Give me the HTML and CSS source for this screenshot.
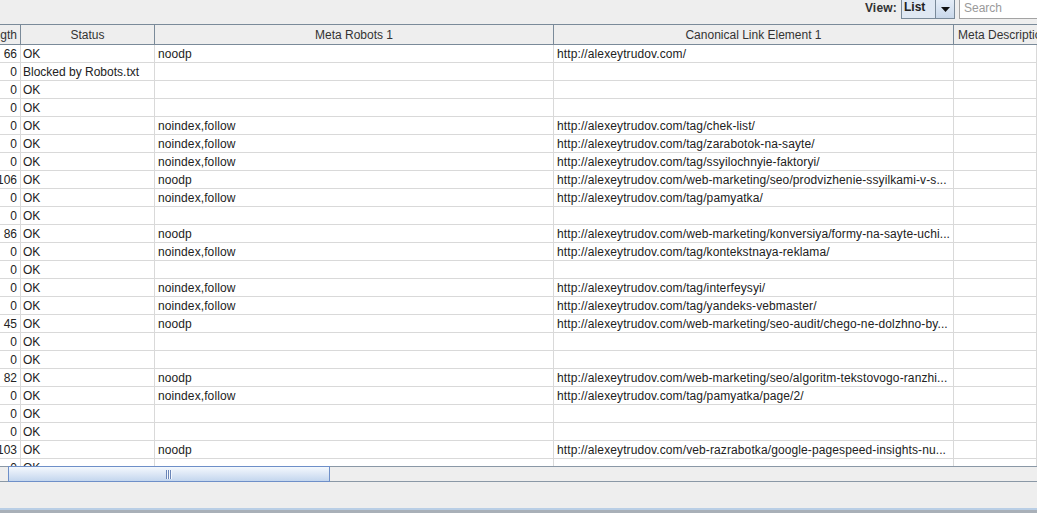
FILE: index.html
```html
<!DOCTYPE html>
<html>
<head>
<meta charset="utf-8">
<link rel="stylesheet" href="styles.css">
</head>
<body>
<div class="app">
  <div class="toolbar">
    <span class="view-label">View:</span>
    <div class="combo">
      <span class="combo-value">List</span>
      <span class="combo-btn"><svg width="9" height="5" viewBox="0 0 9 5"><path d="M0 0H9L4.5 5Z" fill="#111"/></svg></span>
    </div>
    <div class="search">Search</div>
  </div>

  <div class="table">
    <div class="row head">
      <div class="c num"><span>Length</span></div>
      <div class="c">Status</div>
      <div class="c">Meta Robots 1</div>
      <div class="c">Canonical Link Element 1</div>
      <div class="c last">Meta Description 1</div>
    </div>
    <div class="body">
      <div class="row"><div class="c num">66</div><div class="c st">OK</div><div class="c mr">noodp</div><div class="c url">http://alexeytrudov.com/</div><div class="c"></div></div>
      <div class="row"><div class="c num">0</div><div class="c st">Blocked by Robots.txt</div><div class="c mr"></div><div class="c url"></div><div class="c"></div></div>
      <div class="row"><div class="c num">0</div><div class="c st">OK</div><div class="c mr"></div><div class="c url"></div><div class="c"></div></div>
      <div class="row"><div class="c num">0</div><div class="c st">OK</div><div class="c mr"></div><div class="c url"></div><div class="c"></div></div>
      <div class="row"><div class="c num">0</div><div class="c st">OK</div><div class="c mr">noindex,follow</div><div class="c url">http://alexeytrudov.com/tag/chek-list/</div><div class="c"></div></div>
      <div class="row"><div class="c num">0</div><div class="c st">OK</div><div class="c mr">noindex,follow</div><div class="c url">http://alexeytrudov.com/tag/zarabotok-na-sayte/</div><div class="c"></div></div>
      <div class="row"><div class="c num">0</div><div class="c st">OK</div><div class="c mr">noindex,follow</div><div class="c url">http://alexeytrudov.com/tag/ssyilochnyie-faktoryi/</div><div class="c"></div></div>
      <div class="row"><div class="c num">106</div><div class="c st">OK</div><div class="c mr">noodp</div><div class="c url">http://alexeytrudov.com/web-marketing/seo/prodvizhenie-ssyilkami-v-s...</div><div class="c"></div></div>
      <div class="row"><div class="c num">0</div><div class="c st">OK</div><div class="c mr">noindex,follow</div><div class="c url">http://alexeytrudov.com/tag/pamyatka/</div><div class="c"></div></div>
      <div class="row"><div class="c num">0</div><div class="c st">OK</div><div class="c mr"></div><div class="c url"></div><div class="c"></div></div>
      <div class="row"><div class="c num">86</div><div class="c st">OK</div><div class="c mr">noodp</div><div class="c url">http://alexeytrudov.com/web-marketing/konversiya/formy-na-sayte-uchi...</div><div class="c"></div></div>
      <div class="row"><div class="c num">0</div><div class="c st">OK</div><div class="c mr">noindex,follow</div><div class="c url">http://alexeytrudov.com/tag/kontekstnaya-reklama/</div><div class="c"></div></div>
      <div class="row"><div class="c num">0</div><div class="c st">OK</div><div class="c mr"></div><div class="c url"></div><div class="c"></div></div>
      <div class="row"><div class="c num">0</div><div class="c st">OK</div><div class="c mr">noindex,follow</div><div class="c url">http://alexeytrudov.com/tag/interfeysyi/</div><div class="c"></div></div>
      <div class="row"><div class="c num">0</div><div class="c st">OK</div><div class="c mr">noindex,follow</div><div class="c url">http://alexeytrudov.com/tag/yandeks-vebmaster/</div><div class="c"></div></div>
      <div class="row"><div class="c num">45</div><div class="c st">OK</div><div class="c mr">noodp</div><div class="c url">http://alexeytrudov.com/web-marketing/seo-audit/chego-ne-dolzhno-by...</div><div class="c"></div></div>
      <div class="row"><div class="c num">0</div><div class="c st">OK</div><div class="c mr"></div><div class="c url"></div><div class="c"></div></div>
      <div class="row"><div class="c num">0</div><div class="c st">OK</div><div class="c mr"></div><div class="c url"></div><div class="c"></div></div>
      <div class="row"><div class="c num">82</div><div class="c st">OK</div><div class="c mr">noodp</div><div class="c url">http://alexeytrudov.com/web-marketing/seo/algoritm-tekstovogo-ranzhi...</div><div class="c"></div></div>
      <div class="row"><div class="c num">0</div><div class="c st">OK</div><div class="c mr">noindex,follow</div><div class="c url">http://alexeytrudov.com/tag/pamyatka/page/2/</div><div class="c"></div></div>
      <div class="row"><div class="c num">0</div><div class="c st">OK</div><div class="c mr"></div><div class="c url"></div><div class="c"></div></div>
      <div class="row"><div class="c num">0</div><div class="c st">OK</div><div class="c mr"></div><div class="c url"></div><div class="c"></div></div>
      <div class="row"><div class="c num">103</div><div class="c st">OK</div><div class="c mr">noodp</div><div class="c url">http://alexeytrudov.com/veb-razrabotka/google-pagespeed-insights-nu...</div><div class="c"></div></div>
      <div class="row"><div class="c num">0</div><div class="c st">OK</div><div class="c mr"></div><div class="c url"></div><div class="c"></div></div>
    </div>
  </div>

  <div class="hscroll">
    <div class="thumb"><span class="grip"></span></div>
  </div>
  <div class="statusbar"></div>
</div>
</body>
</html>
```

FILE: styles.css
```css
html, body {
  margin: 0;
  padding: 0;
}
body {
  width: 1037px;
  height: 513px;
  overflow: hidden;
  background: #eeeeee;
  font-family: "Liberation Sans", Arial, sans-serif;
  font-size: 12px;
  color: #222;
}
.app {
  display: flex;
  flex-direction: column;
  width: 1037px;
  height: 513px;
}
.toolbar {
  height: 24px;
  display: flex;
  justify-content: flex-end;
  align-items: flex-start;
  background: #eeeeee;
}
.view-label {
  font-weight: bold;
  color: #333;
  line-height: 16px;
  letter-spacing: 0.2px;
  margin-right: 4px;
}
.combo {
  display: flex;
  height: 21px;
  margin-top: -2px;
  box-sizing: border-box;
  border: 1px solid #7a8a99;
  background: #dfe8f3;
}
.combo-value {
  width: 31px;
  padding-left: 2px;
  font-weight: bold;
  color: #222;
  line-height: 17px;
}
.combo-btn {
  width: 19px;
  border-left: 1px solid #7a8a99;
  background: linear-gradient(#e6eef8, #c9d8ea);
  display: flex;
  align-items: center;
  justify-content: center;
  padding-top: 2px;
  box-sizing: border-box;
}
.search {
  width: 90px;
  height: 21px;
  margin-top: -2px;
  margin-left: 4px;
  margin-right: -12px;
  box-sizing: border-box;
  border: 1px solid #a3a3a3;
  background: #fff;
  color: #9a9a9a;
  padding-left: 4px;
  line-height: 19px;
}
.table {
  background: #fff;
}
.row {
  display: grid;
  grid-template-columns: 21px 134px 399px 400px 1fr;
  width: 1037px;
  height: 18px;
  box-sizing: border-box;
  border-bottom: 1px solid #d9d9d9;
}
.c {
  box-sizing: border-box;
  border-right: 1px solid #d9d9d9;
  padding-left: 3px;
  padding-top: 1px;
  line-height: 16px;
  white-space: nowrap;
  overflow: hidden;
}
.st {
  padding-left: 2px;
}
.mr {
  letter-spacing: 0.1px;
}
.url {
  letter-spacing: 0.11px;
}
.num {
  display: flex;
  justify-content: flex-end;
  padding-left: 0;
  padding-right: 3px;
}
.head {
  height: 21px;
  background: #eeeeee;
  border-top: 1px solid #7a8a99;
  border-bottom: 1px solid #7a8a99;
}
.head .c {
  border-right: 1px solid #7a8a99;
  text-align: center;
  padding-top: 2px;
  line-height: 17px;
  color: #333;
  padding-left: 0;
}
.head .num {
  padding-right: 3px;
}
.head .last {
  text-align: left;
  padding-left: 4px;
  border-right: none;
}
.body {
  height: 421px;
  overflow: hidden;
}
.hscroll {
  height: 16px;
  background: linear-gradient(#8a98a6 0 1px, #eeeeee 1px 15px, #8a98a6 15px 16px);
  display: flex;
}
.thumb {
  margin-left: 8px;
  width: 322px;
  height: 16px;
  box-sizing: border-box;
  border: 1px solid #6e8fc8;
  background: linear-gradient(#f4f8fd, #c4d6ee);
  display: flex;
  align-items: center;
  justify-content: center;
}
.grip {
  width: 6px;
  height: 9px;
  background: repeating-linear-gradient(90deg, #6a85b8 0 1px, #f4f8fd 1px 2px);
}
.statusbar {
  flex: 1;
  background: #eeeeee;
  border-bottom: 2px solid #b9cee5;
  margin-bottom: 3px;
  box-shadow: 0 3px 0 #a9b0b8;
}
```
